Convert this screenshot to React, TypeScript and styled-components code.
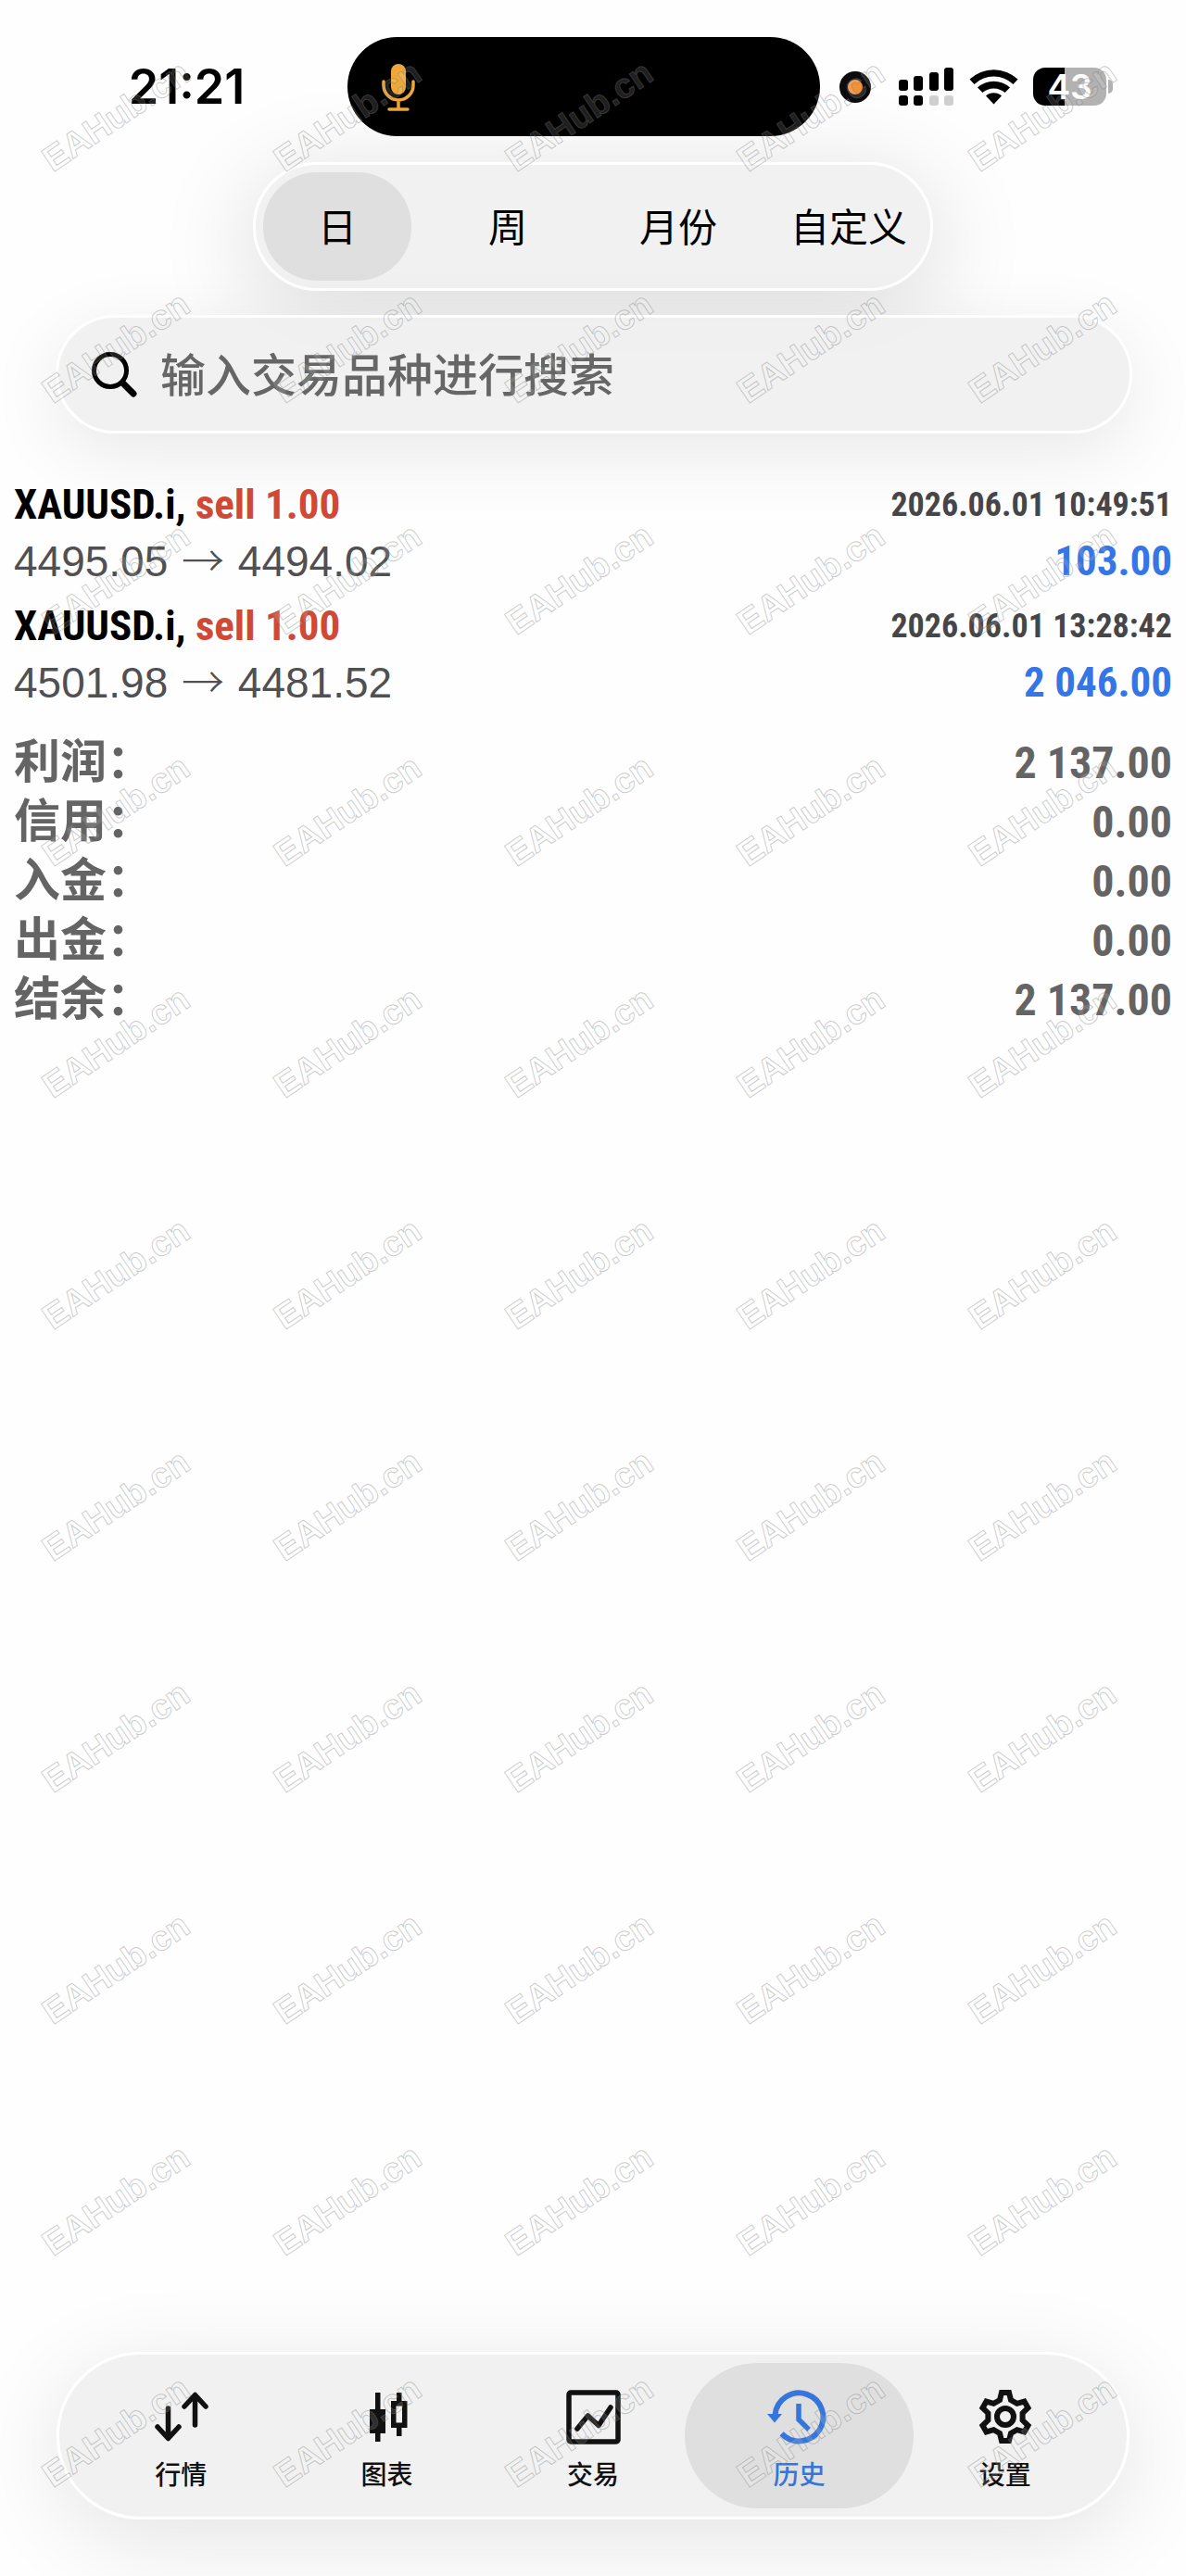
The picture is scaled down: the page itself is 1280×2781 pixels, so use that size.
import React from "react";
import styled, { createGlobalStyle, css } from "styled-components";

const GlobalStyle = createGlobalStyle`
  *, *::before, *::after { box-sizing: border-box; }
  body {
    margin: 0;
    background: #fefefe;
    font-family: "Liberation Sans", "Noto Sans CJK SC", sans-serif;
  }
  button, input { font: inherit; }
`;

const glass = css`
  border: 3px solid #ffffff;
  background: rgba(239, 239, 239, 0.88);
`;

const Screen = styled.div`
  position: relative;
  display: flex;
  flex-direction: column;
  min-height: 100vh;
  overflow: hidden;
`;

const StatusBar = styled.header`
  display: grid;
  grid-template-columns: 1fr 510px 1fr;
  align-items: center;
  padding: 40px 20px 0 0;
`;

const Clock = styled.time`
  justify-self: center;
  padding-left: 28px;
  font: 600 52px/60px Inter, sans-serif;
  color: #000;
`;

const Island = styled.div`
  display: flex;
  align-items: center;
  height: 107px;
  padding-left: 36px;
  border-radius: 54px;
  background: #000;
`;

const StatusIcons = styled.div`
  display: flex;
  align-items: center;
  gap: 16px;
  padding-left: 21px;
`;

const RecordDot = styled.span`
  width: 34px;
  height: 34px;
  margin-right: 14px;
  border: 9px solid #0c0c0f;
  border-radius: 50%;
  background: #f0923a;
`;

const Battery = styled.span`
  position: relative;
  display: flex;
  align-items: center;
  justify-content: center;
  width: 79px;
  height: 41px;
  border-radius: 13px;
  background: linear-gradient(90deg, #000 43%, #b2b2b2 43%);
  font: 600 37px/41px Inter, sans-serif;
  color: #fff;

  &::after {
    content: "";
    position: absolute;
    left: 81px;
    top: 13px;
    width: 5px;
    height: 15px;
    border-radius: 0 5px 5px 0;
    background: #b2b2b2;
  }
`;

const Segments = styled.nav`
  ${glass}
  display: flex;
  align-self: center;
  gap: 24px;
  margin-top: 28px;
  padding: 8px;
  border-radius: 70px;
  box-shadow: 0 20px 100px 10px rgba(0, 0, 0, 0.12);
`;

const Segment = styled.button<{ $active?: boolean }>`
  width: 160px;
  height: 117px;
  padding: 0 0 4px;
  border: 0;
  border-radius: 58px;
  background: ${(p) => (p.$active ? "#dfdfdf" : "transparent")};
  font-size: 42px;
  color: #000;
  white-space: nowrap;
`;

const SearchBar = styled.label`
  ${glass}
  display: flex;
  align-items: center;
  gap: 24px;
  height: 128px;
  margin: 26px 58px 0 60px;
  padding: 0 36px;
  border-radius: 64px;
  box-shadow: 0 20px 80px rgba(0, 0, 0, 0.09);
`;

const SearchInput = styled.input`
  flex: 1;
  min-width: 0;
  height: 76px;
  padding: 4px 0 0;
  border: 0;
  outline: 0;
  background: transparent;
  font-size: 49px;
  font-weight: 500;
  color: #666;

  &::placeholder { color: #666; opacity: 1; }
`;

const Deals = styled.ul`
  display: flex;
  flex-direction: column;
  gap: 9px;
  margin: 46px 0 0;
  padding: 0 15px;
  list-style: none;
`;

const Deal = styled.li`
  display: grid;
  grid-template-columns: 1fr auto;
  align-items: center;
  grid-auto-rows: 61px;
`;

const narrow = css`
  font-family: "Roboto Condensed", "Liberation Sans Narrow", "Arial Narrow", "Liberation Sans", sans-serif;
  font-weight: 700;
`;

const Symbol = styled.span`
  ${narrow}
  font-size: 45px;
  color: #000;
`;

const Side = styled.span`
  color: #cf4936;
`;

const When = styled.time`
  ${narrow}
  font-size: 36px;
  color: #464648;
`;

const Prices = styled.span`
  font-size: 46px;
  color: #505052;
`;

const Arrow = styled.span`
  margin: 0 2px;
  font-family: "Noto Sans CJK SC", sans-serif;
  font-weight: 300;
  line-height: 1;
`;

const Profit = styled.span`
  ${narrow}
  justify-self: end;
  font-size: 45px;
  color: #3575e6;
`;

const Summary = styled.dl`
  margin: 24px 0 0;
  padding: 0 15px;
`;

const SummaryRow = styled.div`
  display: flex;
  justify-content: space-between;
  align-items: center;
  height: 64px;
  color: #646464;
`;

const Term = styled.dt`
  font-size: 50px;
  font-weight: 700;
  line-height: 60px;
`;

const Amount = styled.dd`
  ${narrow}
  margin: 0;
  font-size: 48px;
`;

const TabBar = styled.nav`
  ${glass}
  display: grid;
  grid-template-columns: repeat(5, 1fr);
  margin: auto 61px 61px;
  padding: 9px 20px;
  border-radius: 91px;
  box-shadow: 0 20px 100px rgba(0, 0, 0, 0.11);
`;

const Tab = styled.a<{ $active?: boolean }>`
  display: flex;
  flex-direction: column;
  align-items: center;
  gap: 14px;
  height: 157px;
  margin: 0 -12px;
  padding-top: 28px;
  border-radius: 79px;
  background: ${(p) => (p.$active ? "#dfdfdf" : "transparent")};
  font-size: 28px;
  font-weight: 500;
  line-height: 40px;
  color: ${(p) => (p.$active ? "#3575dc" : "#111")};
  text-decoration: none;
`;

const TabIcon = styled.svg`
  width: 60px;
  height: 60px;
  overflow: visible;
`;

const Watermarks = styled.div`
  position: absolute;
  inset: 0;
  display: grid;
  grid-template-columns: repeat(auto-fill, 250px);
  grid-auto-rows: 250px;
  overflow: hidden;
  pointer-events: none;
  user-select: none;
`;

const Mark = styled.span`
  display: flex;
  align-items: center;
  justify-content: center;
  font-size: 38px;
  font-weight: 700;
  color: rgba(255, 255, 255, 0.12);
  -webkit-text-stroke: 1px rgba(120, 120, 120, 0.38);
  transform: rotate(-34deg);
`;

const gearPoints = Array.from({ length: 6 }, (_, i) => i * 60)
  .flatMap((deg) => {
    const a = (deg * Math.PI) / 180;
    return [[-6, -18], [-4, -26], [4, -26], [6, -18]].map(([x, y]) => {
      const px = 30 + x * Math.cos(a) - y * Math.sin(a);
      const py = 30 + x * Math.sin(a) + y * Math.cos(a);
      return `${px.toFixed(1)},${py.toFixed(1)}`;
    });
  })
  .join(" ");

const icons: Record<string, React.ReactNode> = {
  quotes: (
    <g fill="none" stroke="currentColor" strokeWidth="5.5" strokeLinecap="round" strokeLinejoin="round">
      <path d="M16.5 21V53M5 41L16.5 53.5L28 41" />
      <path d="M45.5 39V7M34 19L45.5 6.500L57 19" />
    </g>
  ),
  chart: (
    <g fill="currentColor">
      <path d="M17 4h5.500v18H28v26h-5.500v9H17v-9h-6V22h6z" />
      <path fillRule="evenodd" d="M40 4h5.500v9H51.500v29H45.500v9H40v-9h-6V13h6zM39.500 18.500v18h6.500v-18z" />
    </g>
  ),
  trade: (
    <g fill="none" stroke="currentColor" strokeWidth="5.5" strokeLinejoin="round" strokeLinecap="round">
      <rect x="4" y="4" width="53" height="53" rx="2" />
      <path d="M13 43L24.500 29L36 39.500L49 20" />
    </g>
  ),
  history: (
    <g fill="none" stroke="currentColor" strokeWidth="6">
      <path d="M4.500 28A26 26 0 1 1 11.600 48.400" />
      <path d="M30 16V33L41 44" strokeWidth="5.500" />
      <path d="M-4 27H12L4 36.500Z" fill="currentColor" stroke="none" />
    </g>
  ),
  settings: (
    <g fill="none" stroke="currentColor" strokeWidth="6" strokeLinejoin="miter">
      <polygon points={gearPoints} />
      <circle cx="30" cy="30" r="9" />
    </g>
  ),
};

const tabs = [
  { id: "quotes", label: "行情" },
  { id: "chart", label: "图表" },
  { id: "trade", label: "交易" },
  { id: "history", label: "历史" },
  { id: "settings", label: "设置" },
];

const deals = [
  { time: "2026.06.01 10:49:51", from: "4495.05", to: "4494.02", profit: "103.00" },
  { time: "2026.06.01 13:28:42", from: "4501.98", to: "4481.52", profit: "2 046.00" },
];

const totals = [
  ["利润：", "2 137.00"],
  ["信用：", "0.00"],
  ["入金：", "0.00"],
  ["出金：", "0.00"],
  ["结余：", "2 137.00"],
];

export default function App() {
  return (
    <>
      <GlobalStyle />
      <Screen>
        <StatusBar>
          <Clock>21:21</Clock>
          <Island>
            <svg width="38" height="52" viewBox="0 0 38 52" fill="none" stroke="#eda73a" strokeWidth="3.5" strokeLinecap="round">
              <rect x="11" y="1" width="16" height="33" rx="8" fill="#eda73a" stroke="none" />
              <path d="M3 20v4a16 16 0 0 0 32 0v-4M19 40v9M9 50H29" />
            </svg>
          </Island>
          <StatusIcons>
            <RecordDot />
            <svg width="60" height="42" viewBox="0 0 60 42">
              <rect x="0" y="13" width="10" height="12" rx="3" />
              <rect x="16" y="9" width="10" height="16" rx="3" />
              <rect x="33" y="5" width="10" height="20" rx="3" />
              <rect x="49" y="0" width="10" height="25" rx="3" />
              <rect x="0" y="30" width="10" height="11" rx="3" />
              <rect x="16" y="30" width="10" height="11" rx="3" />
              <rect x="33" y="30" width="10" height="11" rx="3" fill="#cfcfcf" />
              <rect x="49" y="30" width="10" height="11" rx="3" fill="#cfcfcf" />
            </svg>
            <svg width="53" height="39" viewBox="0 0 53 39">
              <path d="M0.500 11.500A38 38 0 0 1 52.500 11.500L47.500 17A30.500 30.500 0 0 0 5.500 17Z" />
              <path d="M9 20.500A26 26 0 0 1 44 20.500L38.500 26A18 18 0 0 0 14.500 26Z" />
              <path d="M18 29.500A13 13 0 0 1 35 29.500L26.500 38.500Z" />
            </svg>
            <Battery>43</Battery>
          </StatusIcons>
        </StatusBar>

        <Segments>
          <Segment $active>日</Segment>
          <Segment>周</Segment>
          <Segment>月份</Segment>
          <Segment>自定义</Segment>
        </Segments>

        <SearchBar>
          <svg width="50" height="50" viewBox="0 0 50 50" fill="none" stroke="#000" strokeLinecap="round">
            <circle cx="20" cy="21" r="17.500" strokeWidth="5" />
            <path d="M33.500 34.500L45 46" strokeWidth="7" />
          </svg>
          <SearchInput type="search" placeholder="输入交易品种进行搜索" aria-label="输入交易品种进行搜索" />
        </SearchBar>

        <Deals>
          {deals.map((d) => (
            <Deal key={d.time}>
              <Symbol>
                XAUUSD.i, <Side>sell 1.00</Side>
              </Symbol>
              <When>{d.time}</When>
              <Prices>
                {d.from} <Arrow>→</Arrow> {d.to}
              </Prices>
              <Profit>{d.profit}</Profit>
            </Deal>
          ))}
        </Deals>

        <Summary>
          {totals.map(([term, amount]) => (
            <SummaryRow key={term}>
              <Term>{term}</Term>
              <Amount>{amount}</Amount>
            </SummaryRow>
          ))}
        </Summary>

        <TabBar>
          {tabs.map((t) => (
            <Tab key={t.id} href={`#${t.id}`} $active={t.id === "history"}>
              <TabIcon viewBox="0 0 60 60">{icons[t.id]}</TabIcon>
              {t.label}
            </Tab>
          ))}
        </TabBar>

        <Watermarks aria-hidden="true">
          {Array.from({ length: 55 }, (_, i) => (
            <Mark key={i}>EAHub.cn</Mark>
          ))}
        </Watermarks>
      </Screen>
    </>
  );
}
